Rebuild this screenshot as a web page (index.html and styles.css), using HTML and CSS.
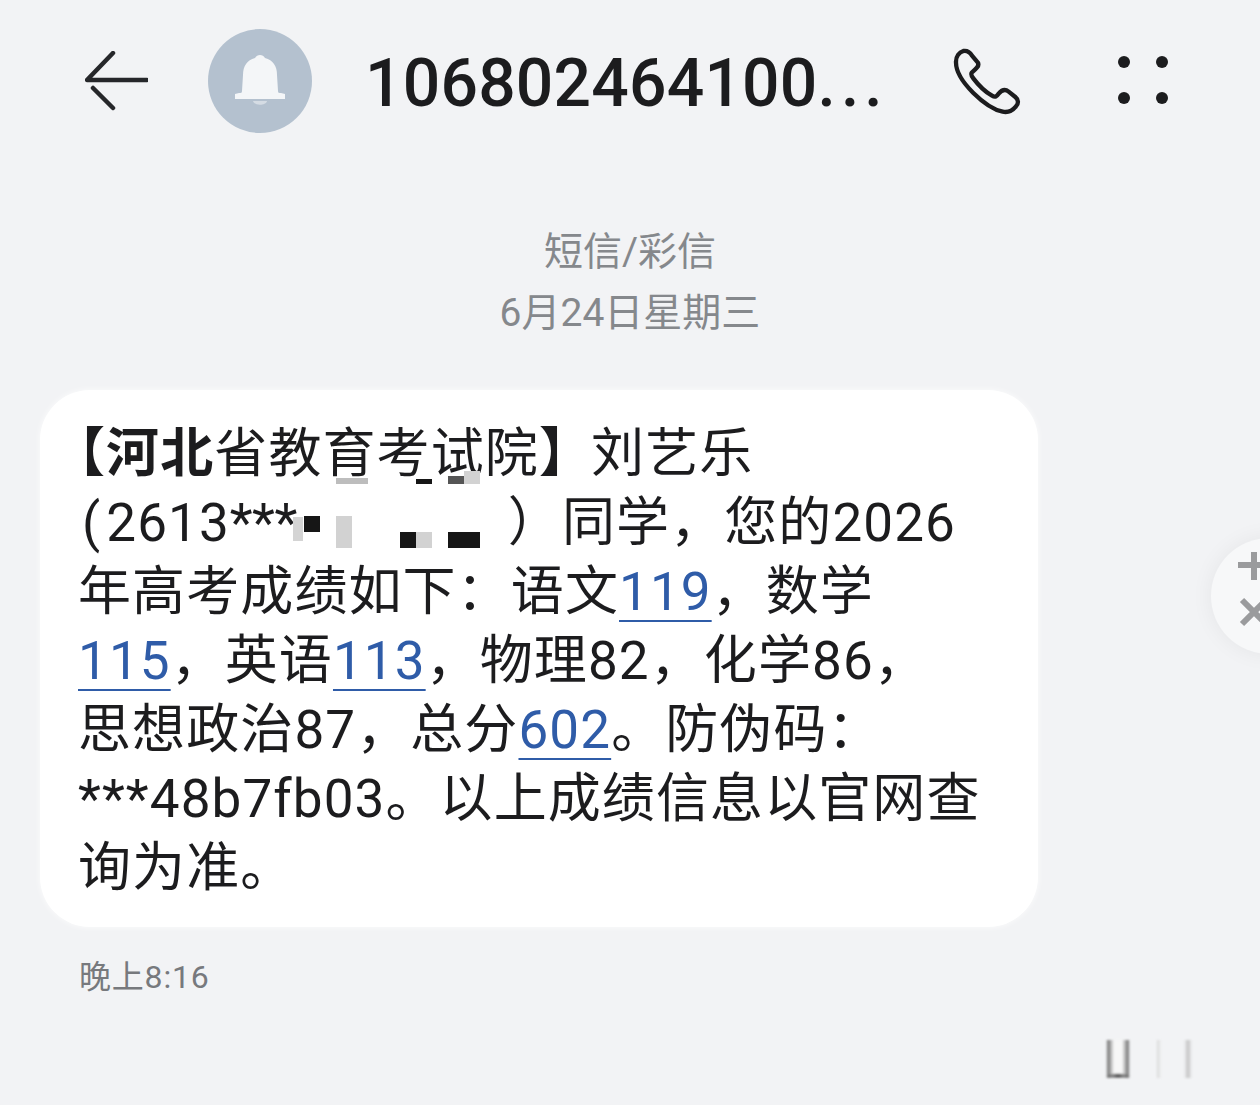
FILE: index.html
```html
<!DOCTYPE html>
<html lang="zh-CN">
<head>
    <meta charset="UTF-8">
    <title>短信</title>
    <link rel="stylesheet" href="styles.css">
</head>
<body>

<header class="top-bar">
    <svg class="back-icon" viewBox="0 0 63 60" width="63" height="60">
        <path d="M28 2 L2 29 L62 29 M8 37 L28 57"></path>
    </svg>
    <div class="avatar">
        <svg viewBox="0 0 52 52" width="52" height="52">
            <path class="bell" d="M26 0 C28 0 30 1 31 3 C39 5 43 11 43 20 L44 36 C44 38 45 38 47 38 L51 39 L51 44 L1 44 L1 39 L5 38 C7 38 8 38 8 36 L9 20 C9 11 13 5 21 3 C22 1 24 0 26 0 Z"></path>
            <path class="bell-foot" d="M19 46 L33 46 C32 51 20 51 19 46 Z"></path>
        </svg>
    </div>
    <h1 class="title">106802464100<span class="dots">...</span></h1>
    <svg class="phone-icon" viewBox="60 45 225 210" width="75" height="70">
        <path d="M100 60 C112 58 120 64 126 74 L143 94 C150 104 138 114 126 124 C122 128 124 134 130 142 C145 162 165 182 186 194 C196 200 200 196 206 188 C216 176 226 174 236 182 L256 198 C266 206 266 218 258 226 C248 238 236 246 218 242 C170 232 76 150 78 92 C78 76 88 64 100 60 Z"></path>
    </svg>
    <div class="more-dots">
        <span></span><span></span><span></span><span></span>
    </div>
</header>

<div class="thread-info">
    <p>短信/彩信</p>
    <p>6月24日星期三</p>
</div>

<div class="bubble">
    <b class="open-bracket">【河北</b>省教育考试院<b class="close-bracket">】</b>刘艺乐<br>
    <span class="paren">(</span>2613<span class="stars">***</span><span class="redacted"></span>）同学，您的2026<br>
    年高考成绩如下：语文<a>119</a>，数学<br>
    <a>115</a>，英语<a>113</a>，物理82，化学86，<br>
    思想政治87，总分<a>602</a>。防伪码：<br>
    ***48b7fb03。以上成绩信息以官网查<br>
    询为准。
    <i class="px px-g1"></i>
    <i class="px px-k1"></i>
    <i class="px px-k2"></i>
    <i class="px px-g2"></i>
    <i class="px px-g3"></i>
    <i class="px px-k3"></i>
    <i class="px px-g4"></i>
    <i class="px px-k4"></i>
    <i class="px px-k5"></i>
    <i class="px px-g5"></i>
</div>

<p class="msg-time">晚上8:16</p>

<div class="float-clip">
    <div class="float-btn">
        <svg viewBox="0 0 49 90" width="49" height="90">
            <path d="M27 27 L49 27 M43 14 L43 42 M31 62 L55 86 M31 86 L55 62"></path>
        </svg>
    </div>
</div>

<!-- blurred remains of the watermark, bottom right -->
<div class="watermark"></div>

</body>
</html>
```

FILE: styles.css
```css
html, body {
    margin: 0;
    padding: 0;
}
body {
    position: relative;
    width: 1260px;
    height: 1105px;
    overflow: hidden;
    background-color: #f2f3f5;
    font-family: Roboto, "Noto Sans CJK SC", sans-serif;
    color: #1c1c1e;
}

/* Top bar */
.top-bar {
    display: flex;
    align-items: center;
    height: 162px;
    padding-left: 85px;
}
.back-icon {
    margin-right: 60px;
    flex: none;
}
.back-icon path {
    fill: none;
    stroke: #26272a;
    stroke-width: 4.5;
    stroke-linecap: round;
    stroke-linejoin: round;
}
.avatar {
    width: 104px;
    height: 104px;
    border-radius: 50%;
    background-color: #b4c1cf;
    display: flex;
    align-items: center;
    justify-content: center;
    margin-right: 53px;
    flex: none;
}
.bell {
    fill: #f4f6f8;
}
.bell-foot {
    fill: #d5dce4;
}
.title {
    margin: 6px 0 0;
    width: 590px;
    flex: none;
    font-size: 66px;
    font-weight: 500;
    letter-spacing: 0.2px;
    line-height: 80px;
    white-space: nowrap;
}
.title .dots {
    letter-spacing: 5px;
}
.phone-icon {
    flex: none;
    margin-left: -5px;
}
.phone-icon path {
    fill: none;
    stroke: #1c1c1e;
    stroke-width: 13;
    stroke-linejoin: round;
}
.more-dots {
    display: grid;
    grid-template-columns: 12px 12px;
    grid-template-rows: 12px 12px;
    column-gap: 26px;
    row-gap: 24px;
    margin-left: 93px;
    margin-bottom: 2px;
}
.more-dots span {
    background-color: #1c1c1e;
    border-radius: 50%;
}

/* Source and date */
.thread-info {
    text-align: center;
    color: #85888c;
    font-size: 39px;
    line-height: 61px;
    height: 228px;
    padding-top: 60px;
    box-sizing: border-box;
}
.thread-info p {
    margin: 0;
}

/* Message */
.bubble {
    position: relative;
    width: 922px;
    height: 484px;
    margin-left: 40px;
    padding: 30px 38px 23px;
    background-color: #ffffff;
    border-radius: 50px;
    font-size: 53px;
    line-height: 69px;
    letter-spacing: 1.1px;
    white-space: nowrap;
    box-shadow: 0 0 6px rgba(255, 255, 255, 0.8);
}
.bubble a {
    color: #2f5ca8;
    text-decoration: underline;
    text-decoration-thickness: 2px;
    text-underline-offset: 10px;
}
.open-bracket {
    margin-left: -26px;
}
.close-bracket {
    margin-right: -2px;
}
.paren {
    margin: 0 5px 0 4px;
}
.stars {
    letter-spacing: -0.5px;
}
.redacted {
    display: inline-block;
    width: 211px;
}
.px {
    position: absolute;
    display: block;
}
.px-g1 { left: 253px; top: 127px; width: 10px; height: 24px; background-color: #d4d4d4; }
.px-k1 { left: 264px; top: 126px; width: 16px; height: 16px; background-color: #161616; }
.px-g2 { left: 296px; top: 126px; width: 16px; height: 32px; background-color: #d2d2d2; }
.px-k2 { left: 360px; top: 142px; width: 16px; height: 16px; background-color: #161616; }
.px-g3 { left: 376px; top: 142px; width: 16px; height: 16px; background-color: #d2d2d2; }
.px-k3 { left: 408px; top: 142px; width: 32px; height: 16px; background-color: #161616; }
.px-g4 { left: 296px; top: 88px; width: 32px; height: 6px; background-color: #bdbdbd; }
.px-k4 { left: 376px; top: 89px; width: 16px; height: 5px; background-color: #161616; }
.px-k5 { left: 408px; top: 86px; width: 16px; height: 8px; background-color: #555555; }
.px-g5 { left: 424px; top: 81px; width: 16px; height: 13px; background-color: #d2d2d2; }

.msg-time {
    margin: 28px 0 0 79px;
    font-size: 32px;
    letter-spacing: 0.8px;
    line-height: 44px;
    color: #77797d;
}

/* Floating button cut off by the right edge */
.float-clip {
    position: absolute;
    left: 1180px;
    top: 510px;
    width: 80px;
    height: 170px;
    overflow: hidden;
}
.float-btn {
    position: absolute;
    left: 31px;
    top: 28px;
    width: 116px;
    height: 116px;
    border-radius: 50%;
    background-color: #f7f8f9;
    box-shadow: 0 0 22px rgba(0, 0, 0, 0.06);
}
.float-btn svg {
    display: block;
}
.float-btn path {
    fill: none;
    stroke: #9a9b9d;
    stroke-width: 6;
}

.watermark {
    position: absolute;
    left: 1030px;
    top: 1040px;
    width: 200px;
    height: 38px;
    filter: blur(1px);
    background:
        radial-gradient(ellipse 12px 3px at 88px 36px, #222 0, rgba(0, 0, 0, 0) 100%),
        linear-gradient(90deg, transparent 76px, #777 78px, #f7f7f7 84px, #f7f7f7 92px, #777 98px, transparent 100px,
            transparent 126px, #ddd 128px, transparent 131px, transparent 154px, #c4c4c4 158px, transparent 162px);
}
```
